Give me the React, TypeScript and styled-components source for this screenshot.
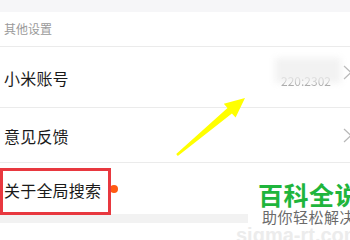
import styled, { createGlobalStyle } from 'styled-components';

const GlobalStyle = createGlobalStyle`
    html, body {
        margin: 0;
        padding: 0;
        background: #ffffff;
        font-family: "Noto Sans CJK SC", "Noto Sans", sans-serif;
    }
`;

type Row = {
    label: string,
    value?: string,
    chevron: boolean,
    dot?: boolean,
}

const rows: Row[] = [
    { label: '小米账号', value: '220:2302', chevron: true },
    { label: '意见反馈', chevron: true },
    { label: '关于全局搜索', chevron: false, dot: true },
];

const Chevron = () => (
    <svg width="9" height="15" viewBox="0 0 9 15">
        <path d="M1 1 L8 7.5 L1 14" fill="none" stroke="#b8b8b8" strokeWidth="1.2" />
    </svg>
);

export default function App() {
    return (
        <Screen>
            <GlobalStyle />
            <TopBand />
            <SectionTitle>其他设置</SectionTitle>
            <List>
                {rows.map((row) => (
                    <Item key={row.label} $tall={!!row.value}>
                        <Label>
                            {row.label}
                            {row.dot && <Dot />}
                        </Label>
                        {row.value && <Value>{row.value}</Value>}
                        {row.chevron && <ChevronBox $up={!!row.value}><Chevron /></ChevronBox>}
                        {row.dot && <Highlight />}
                    </Item>
                ))}
            </List>
            <BottomBand />
            <Arrow width="80" height="70" viewBox="0 0 80 70">
                <path d="M1.2 59 L52.5 13.1 L48.8 8.8 L70 3 L60.6 22.6 L56.9 18.5 L2.8 61 Z" fill="#ffff00" />
            </Arrow>
            <Watermark>
                <Brand>百科全说</Brand>
                <Slogan>助你轻松解决</Slogan>
            </Watermark>
            <Site>sigma-rt.com</Site>
        </Screen>
    );
}

const Screen = styled.div`
    position: relative;
    width: 350px;
    height: 240px;
    overflow: hidden;
    background: #ffffff;
`;

const TopBand = styled.div`
    height: 12px;
    background: #f6f6f8;
`;

const SectionTitle = styled.div`
    height: 34px;
    line-height: 34px;
    padding-left: 4px;
    font-size: 12px;
    color: #9a9a9a;
    border-bottom: 1px solid #ebebeb;
`;

const List = styled.div`
    display: flex;
    flex-direction: column;
`;

const Item = styled.div<{ $tall: boolean }>`
    position: relative;
    display: flex;
    align-items: center;
    height: ${(p) => (p.$tall ? '60px' : '54px')};
    padding: 0 4px;
    border-bottom: 1px solid #ebebeb;

    &:last-child {
        height: 51px;
        border-bottom: none;
    }
`;

const Label = styled.div`
    position: relative;
    flex: 1;
    font-size: 16px;
    color: #1a1a1a;
    letter-spacing: 0.2px;
    margin-top: 2px;
`;

const Dot = styled.span`
    position: absolute;
    left: 106px;
    top: 7px;
    width: 8px;
    height: 8px;
    border-radius: 50%;
    background: #ff5a12;
`;

const Value = styled.div`
    position: relative;
    margin-right: 12px;
    margin-top: 6px;
    font-size: 12px;
    color: #9c9c9c;
    filter: blur(0.7px);

    &::after {
        content: '';
        position: absolute;
        left: -6px;
        right: -10px;
        top: -14px;
        bottom: 6px;
        background: rgba(240, 240, 240, 0.85);
        filter: blur(3px);
    }
`;

const ChevronBox = styled.div<{ $up: boolean }>`
    display: flex;
    margin-right: -6px;
    margin-top: ${(p) => (p.$up ? '-10px' : '0')};
`;

const Highlight = styled.div`
    position: absolute;
    left: 0;
    top: 5px;
    width: 111px;
    height: 47px;
    box-sizing: border-box;
    border: 3px solid #e8383f;
`;

const BottomBand = styled.div`
    height: 9px;
    background: #f2f2f2;
`;

const Arrow = styled.svg`
    position: absolute;
    left: 175px;
    top: 95px;
`;

const Watermark = styled.div`
    position: absolute;
    left: 248px;
    top: 177px;
    width: 120px;
    padding: 3px 0 0 10px;
    background: #ffffff;
    display: flex;
    flex-direction: column;
`;

const Brand = styled.div`
    font-size: 25px;
    line-height: 28px;
    font-weight: 700;
    color: #1fb53c;
    white-space: nowrap;
    letter-spacing: 0.5px;
`;

const Slogan = styled.div`
    font-size: 15px;
    line-height: 18px;
    color: #6a6a6a;
    white-space: nowrap;
    margin-left: 4px;
    letter-spacing: 0.5px;
`;

const Site = styled.div`
    position: absolute;
    left: 236px;
    top: 224px;
    font-family: "Liberation Sans", Arial, sans-serif;
    font-size: 20px;
    font-weight: 700;
    color: #ececec;
    white-space: nowrap;
`;
